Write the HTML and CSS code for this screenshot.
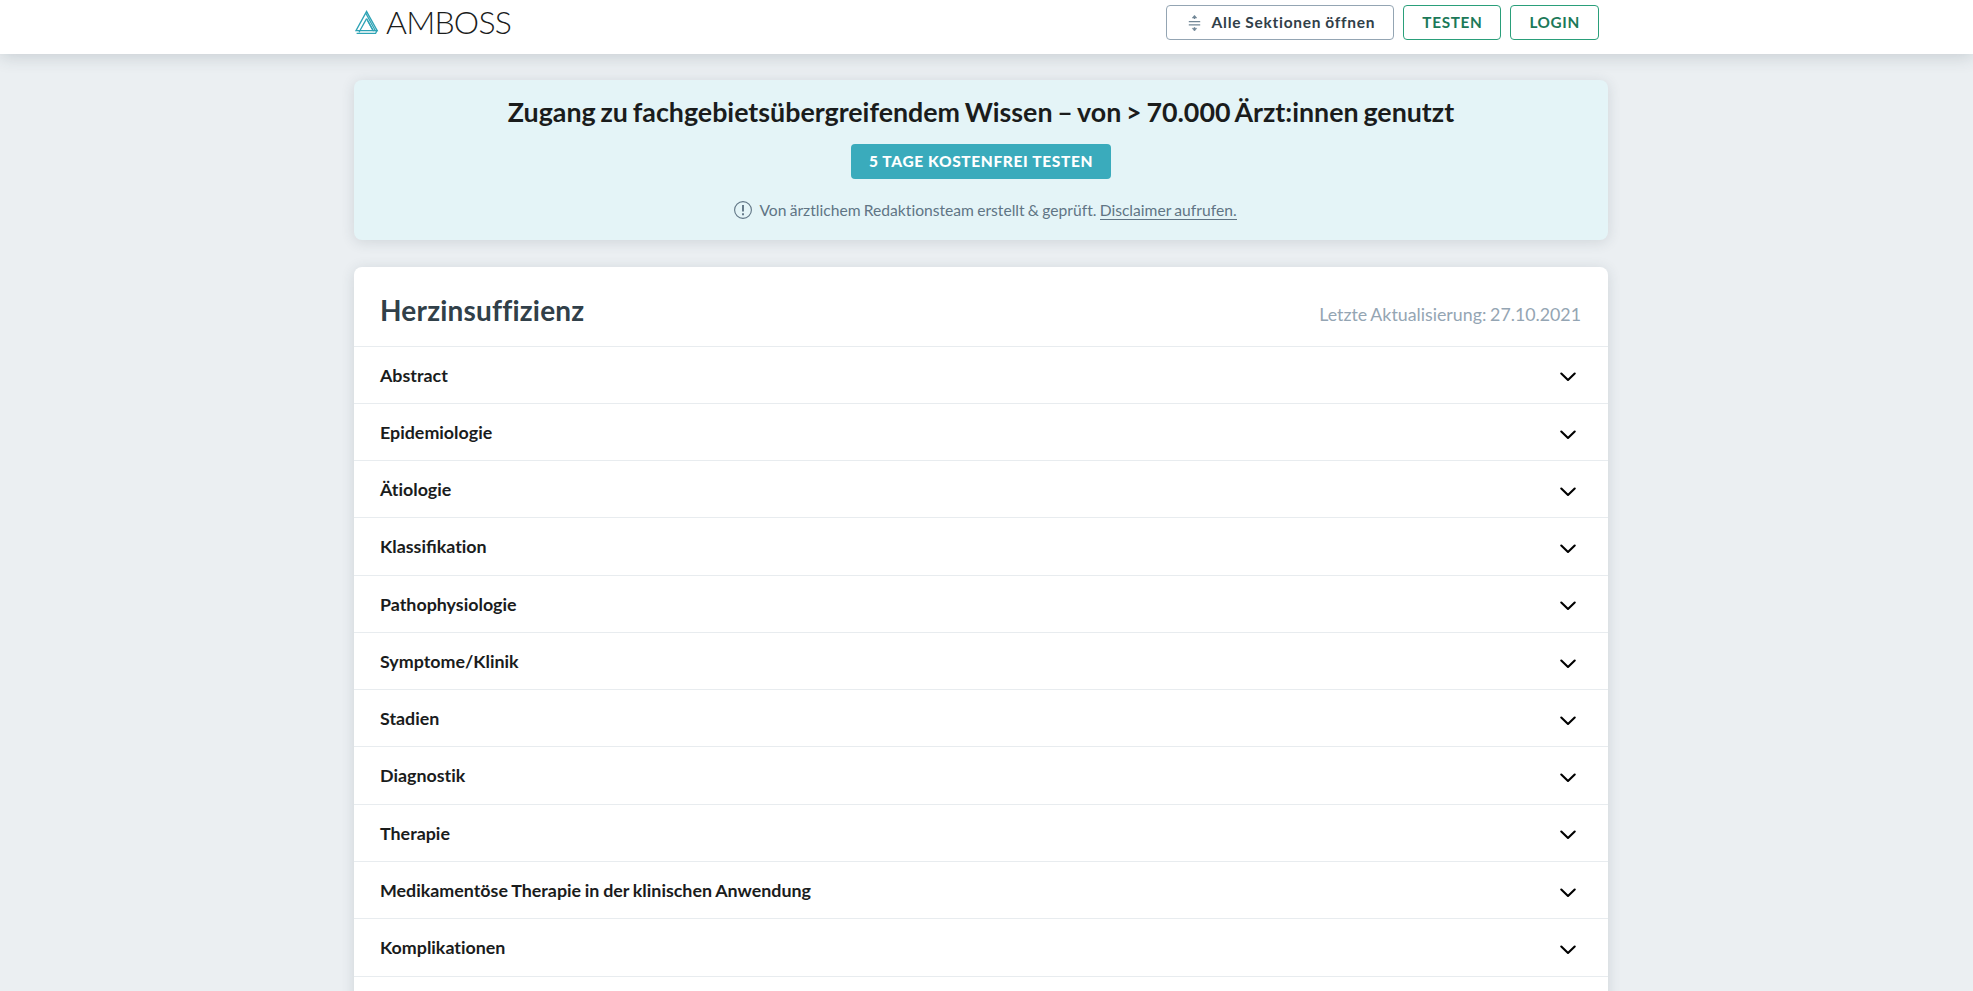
FILE: index.html
```html
<!DOCTYPE html>
<html lang="de">
<head>
    <meta charset="UTF-8">
    <meta name="viewport" content="width=device-width, initial-scale=1.0">
    <title>Herzinsuffizienz - AMBOSS</title>
    <link rel="stylesheet" href="styles.css">
</head>
<body>
    <svg class="sprite" width="0" height="0">
        <symbol id="chevron" viewBox="0 0 16 10">
            <path d="M1.3 1.5L8 8L14.7 1.5" fill="none" stroke="#000" stroke-width="2.1" stroke-linecap="round" stroke-linejoin="round"/>
        </symbol>
    </svg>

    <header class="header">
        <div class="header-inner">
            <a class="logo">
                <svg class="logo-icon" width="25" height="26" viewBox="0 0 25 26" fill="none" stroke="#2ea3b5" stroke-width="1.3">
                    <path d="M13.6 4.2L12.6 2.4L2 21.7H19.2L12.6 9.6"/>
                    <path d="M11.8 4.2L21.3 21.7H23.2L13.2 3.6"/>
                    <path d="M12.6 9.6L5 23.2M2.6 24.4H21.6L23 21.7H19.2L13.8 12"/>
                </svg>
                <span class="logo-text">AMBOSS</span>
            </a>
            <nav class="nav">
                <button class="button button-grey">
                    <svg width="13" height="18" viewBox="0 0 13 18" fill="none" stroke="#718796" stroke-width="1.3">
                        <path d="M.8 7.6H12.2M.8 10.9H12.2M6.5 5V2M6.5 13.3V16.3"/>
                        <path d="M6.5 1.2L8.8 4H4.2ZM6.5 17L8.8 14.3H4.2Z" fill="#718796" stroke-width=".5"/>
                    </svg>
                    <span>Alle Sektionen öffnen</span>
                </button>
                <button class="button button-green">TESTEN</button>
                <button class="button button-green">LOGIN</button>
            </nav>
        </div>
    </header>

    <main class="content">
        <section class="banner">
            <h2 class="banner-title">Zugang zu fachgebietsübergreifendem Wissen – von &gt; 70.000 Ärzt:innen genutzt</h2>
            <button class="banner-button">5 TAGE KOSTENFREI TESTEN</button>
            <p class="disclaimer">
                <svg width="18" height="18" viewBox="0 0 18 18" fill="none" stroke="#607585">
                    <circle cx="9" cy="9" r="8.4" stroke-width="1.1"/>
                    <path d="M9 4V10.6M9 12.3V14.2" stroke-width="1.9"/>
                </svg>
                <span>Von ärztlichem Redaktionsteam erstellt &amp; geprüft. <a class="disclaimer-link">Disclaimer aufrufen.</a></span>
            </p>
        </section>

        <article class="card">
            <div class="card-header">
                <h1 class="card-title">Herzinsuffizienz</h1>
                <span class="updated">Letzte Aktualisierung: 27.10.2021</span>
            </div>
            <div class="section"><span>Abstract</span><svg class="chevron"><use href="#chevron"/></svg></div>
            <div class="section"><span>Epidemiologie</span><svg class="chevron"><use href="#chevron"/></svg></div>
            <div class="section"><span>Ätiologie</span><svg class="chevron"><use href="#chevron"/></svg></div>
            <div class="section"><span>Klassi<span class="ligature">fi</span>kation</span><svg class="chevron"><use href="#chevron"/></svg></div>
            <div class="section"><span>Pathophysiologie</span><svg class="chevron"><use href="#chevron"/></svg></div>
            <div class="section"><span>Symptome/Klinik</span><svg class="chevron"><use href="#chevron"/></svg></div>
            <div class="section"><span>Stadien</span><svg class="chevron"><use href="#chevron"/></svg></div>
            <div class="section"><span>Diagnostik</span><svg class="chevron"><use href="#chevron"/></svg></div>
            <div class="section"><span>Therapie</span><svg class="chevron"><use href="#chevron"/></svg></div>
            <div class="section"><span>Medikamentöse Therapie in der klinischen Anwendung</span><svg class="chevron"><use href="#chevron"/></svg></div>
            <div class="section"><span>Komplikationen</span><svg class="chevron"><use href="#chevron"/></svg></div>
            <div class="section"></div>
        </article>
    </main>
</body>
</html>
```

FILE: styles.css
```css
* {
    box-sizing: border-box;
}

body {
    margin: 0;
    height: 100vh;
    overflow: hidden;
    background-color: #ebeff2;
    font-family: 'Lato', sans-serif;
    font-variant-ligatures: none;
    color: #1a1c1c;
}

.sprite {
    display: block;
}

/* Header */
.header {
    position: relative;
    height: 54px;
    background-color: #fff;
    box-shadow: 0 2px 18px rgba(40, 60, 70, 0.2);
}

.header-inner {
    display: flex;
    justify-content: space-between;
    align-items: flex-start;
    width: 1254px;
    margin-left: 354px;
    padding: 5px 9px 0 0;
}

.logo {
    display: flex;
    align-items: flex-start;
    gap: 7px;
    padding-top: 2px;
}

.logo-icon {
    margin-top: 2px;
}

.logo-text {
    font-size: 32px;
    font-weight: 300;
    line-height: 30px;
    letter-spacing: -0.8px;
    color: #1a1c1c;
}

.nav {
    display: flex;
    gap: 9px;
}

.button {
    display: flex;
    align-items: center;
    height: 35px;
    padding: 0 18px 2px;
    background-color: #fff;
    border: 1px solid;
    border-radius: 4px;
    font-family: 'Lato', sans-serif;
    font-size: 15.3px;
    font-weight: 700;
    letter-spacing: 0.65px;
}

.button-grey {
    gap: 11px;
    padding: 0 18px 2px 21px;
    border-color: #94a5b3;
    font-size: 15.5px;
    letter-spacing: 0.75px;
    word-spacing: -0.6px;
    color: #314049;
}

.button-grey svg {
    margin-top: 2px;
}

.button-green {
    border-color: #2a9f7a;
    color: #1c7959;
}

.content {
    width: 1254px;
    margin: 26px 0 0 354px;
}

/* Banner */
.banner {
    display: flex;
    flex-direction: column;
    align-items: center;
    height: 160px;
    padding-top: 15px;
    background-color: #e4f4f7;
    border-radius: 8px;
    box-shadow: 0 2px 14px rgba(40, 60, 70, 0.14);
}

.banner-title {
    margin: 0 0 14px;
    font-size: 26.8px;
    font-weight: 700;
    line-height: 35px;
    word-spacing: -1.7px;
}

.banner-button {
    height: 35px;
    padding: 0 18px 2px;
    background-color: #3aabbc;
    border: none;
    border-radius: 4px;
    font-family: 'Lato', sans-serif;
    font-size: 15.5px;
    font-weight: 900;
    letter-spacing: 0.63px;
    color: #fff;
}

.disclaimer {
    display: flex;
    align-items: center;
    gap: 7px;
    margin: 21px 0 0;
    padding-left: 9px;
    font-size: 15.65px;
    line-height: 20px;
    word-spacing: -0.8px;
    color: #607585;
}

.disclaimer-link {
    border-bottom: 1px solid #607585;
}

/* Article */
.card {
    margin-top: 27px;
    background-color: #fff;
    border-radius: 8px;
    box-shadow: 0 2px 14px rgba(40, 60, 70, 0.14);
}

.card-header {
    display: flex;
    justify-content: space-between;
    align-items: baseline;
    height: 78.6px;
    padding: 25px 27px 0 26px;
}

.card-title {
    margin: 0;
    font-size: 28px;
    font-weight: 700;
    line-height: 36px;
    letter-spacing: 0.2px;
    color: #314049;
}

.updated {
    font-size: 17.8px;
    word-spacing: -0.8px;
    color: #94a5b3;
}

.section {
    display: flex;
    justify-content: space-between;
    align-items: center;
    height: 57.27px;
    padding: 0 32px 0.4px 26px;
    border-top: 1px solid #e8ecef;
    font-size: 17.85px;
    font-weight: 700;
    word-spacing: -0.6px;
}

.ligature {
    font-variant-ligatures: common-ligatures;
}

.chevron {
    width: 16px;
    height: 10px;
    margin-top: 5.5px;
}
```
